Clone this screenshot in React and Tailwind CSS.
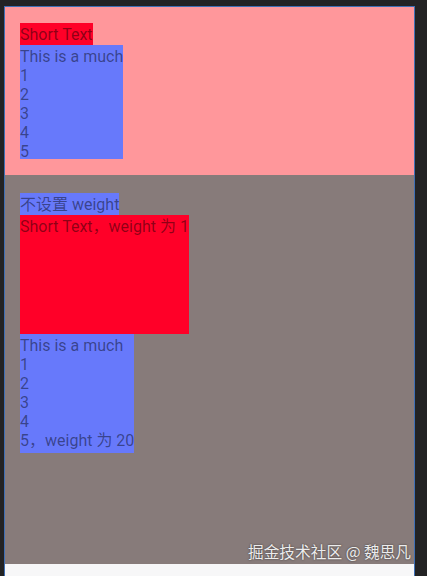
export default function App() {
  const font = { fontFamily: 'Roboto, "Noto Sans CJK SC", sans-serif' };
  return (
    <div className="relative w-[427px] h-[576px] overflow-hidden bg-[#232324] pl-[4px] pt-[6px]" style={font}>
      <div className="w-[411px] h-[580px] border-l border-t border-r border-[#3f6fb5] flex flex-col">
        <div className="h-[168px] bg-[#ff979b] pl-[15px] pt-[16px] text-[16px] leading-[19px] text-black/45 flex flex-col items-start">
          <div className="w-[73px] h-[22px] bg-[#ff0028] pt-[2px] whitespace-nowrap">Short Text</div>
          <div className="w-[103px] h-[114px] bg-[#6779fb] pt-[2px] whitespace-nowrap">
            This is a much<br />1<br />2<br />3<br />4<br />5
          </div>
        </div>
        <div className="h-[389px] bg-[#877b7a] pl-[15px] pt-[18px] text-[16px] leading-[19px] text-black/45 flex flex-col items-start">
          <div className="w-[99px] h-[22px] bg-[#6779fb] pt-[2px] whitespace-nowrap">不设置 weight</div>
          <div className="w-[169px] h-[119px] bg-[#ff0028] pt-[2px] whitespace-nowrap">Short Text，weight 为 1</div>
          <div className="w-[114px] h-[119px] bg-[#6779fb] pt-[2px] whitespace-nowrap">
            This is a much<br />1<br />2<br />3<br />4<br />5，weight 为 20
          </div>
        </div>
        <div className="flex-1 bg-[#f7f7f8]"></div>
      </div>
      <div
        className="absolute left-[248px] top-[542px] text-[15.7px] leading-[20px] text-[#ececec] whitespace-nowrap"
        style={{ fontFamily: '"Noto Sans CJK SC", sans-serif', textShadow: '0 0 2px rgba(0,0,0,0.6)' }}
      >
        掘金技术社区 @ 魏思凡
      </div>
    </div>
  );
}
